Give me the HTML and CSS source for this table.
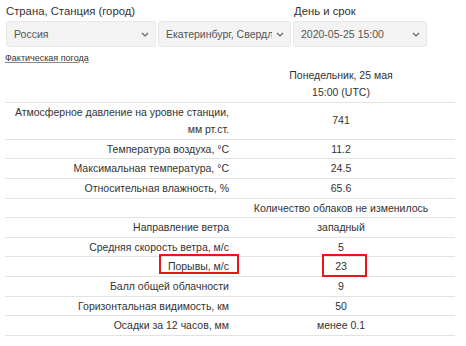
FILE: index.html
```html
<!DOCTYPE html>
<html lang="ru">
<head>
<meta charset="utf-8">
<title>Фактическая погода</title>
<link rel="stylesheet" href="styles.css">
</head>
<body>
<div class="filters">
  <div class="group group-station">
    <div class="label">Страна, Станция (город)</div>
    <div class="selects">
      <div class="select sel-country"><span class="sel-text">Россия</span><svg class="chev" viewBox="0 0 8 5" width="8" height="5"><path d="M1 1l3 3 3-3" fill="none" stroke="#666" stroke-width="1.2"/></svg></div>
      <div class="select sel-city"><span class="sel-text">Екатеринбург, Свердловская область</span><svg class="chev" viewBox="0 0 8 5" width="8" height="5"><path d="M1 1l3 3 3-3" fill="none" stroke="#666" stroke-width="1.2"/></svg></div>
    </div>
  </div>
  <div class="group group-date">
    <div class="label">День и срок</div>
    <div class="select sel-date"><span class="sel-text">2020-05-25 15:00</span><svg class="chev" viewBox="0 0 8 5" width="8" height="5"><path d="M1 1l3 3 3-3" fill="none" stroke="#666" stroke-width="1.2"/></svg></div>
  </div>
</div>
<a class="fact-link" href="#">Фактическая погода</a>
<table class="wx">
  <thead>
    <tr><th class="lbl"></th><th class="val">Понедельник, 25 мая<br>15:00 (UTC)</th></tr>
  </thead>
  <tbody>
    <tr class="tall"><td class="lbl">Атмосферное давление на уровне станции,<br>мм рт.ст.</td><td class="val">741</td></tr>
    <tr><td class="lbl">Температура воздуха, °C</td><td class="val">11.2</td></tr>
    <tr><td class="lbl">Максимальная температура, °C</td><td class="val">24.5</td></tr>
    <tr><td class="lbl">Относительная влажность, %</td><td class="val">65.6</td></tr>
    <tr><td class="lbl"></td><td class="val">Количество облаков не изменилось</td></tr>
    <tr><td class="lbl">Направление ветра</td><td class="val">западный</td></tr>
    <tr><td class="lbl">Средняя скорость ветра, м/с</td><td class="val">5</td></tr>
    <tr><td class="lbl"><span class="mark mark-lbl">Порывы, м/с</span></td><td class="val"><span class="mark mark-val">23</span></td></tr>
    <tr><td class="lbl">Балл общей облачности</td><td class="val">9</td></tr>
    <tr><td class="lbl">Горизонтальная видимость, км</td><td class="val">50</td></tr>
    <tr><td class="lbl">Осадки за 12 часов, мм</td><td class="val">менее 0.1</td></tr>
  </tbody>
</table>
</body>
</html>
```

FILE: styles.css
```css
html, body {
  margin: 0;
  padding: 0;
  background: #fff;
}
body {
  font-family: "Liberation Sans", Arial, sans-serif;
  font-size: 10.5px;
  color: #333;
  padding: 4px 5px 0 5px;
}
.filters {
  display: flex;
  gap: 2px;
}
.group {
  display: flex;
  flex-direction: column;
}
.label {
  line-height: 15px;
  margin-left: 1px;
  margin-bottom: 2px;
  font-size: 11.3px;
}
.selects {
  display: flex;
  gap: 2px;
}
.select {
  box-sizing: border-box;
  height: 26px;
  background: #f3f3f3;
  border: 1px solid #e8e8e8;
  border-radius: 3px;
  display: flex;
  align-items: center;
  padding: 0 6px 0 7px;
  color: #555;
  font-size: 10.5px;
  overflow: hidden;
}
.sel-text {
  flex: 1;
  white-space: nowrap;
  overflow: hidden;
  min-width: 0;
}
.chev {
  flex: none;
  margin-left: 4px;
}
.sel-country { width: 150px; margin-left: 1px; }
.sel-city { width: 133px; }
.sel-date { width: 134px; }

.fact-link {
  display: block;
  margin-top: 4px;
  font-size: 9px;
  line-height: 14px;
  color: #333;
  text-decoration: underline;
  text-decoration-color: #888;
}

.wx {
  border-collapse: collapse;
  width: 450px;
  table-layout: fixed;
  margin-top: 0;
}
.wx th, .wx td {
  font-weight: normal;
  padding: 1px 0;
  line-height: 16.6px;
  white-space: nowrap;
}
.wx th {
  padding: 2px 0 0;
  line-height: 17.4px;
}
.wx .tall td {
  line-height: 17px;
}
.wx td {
  border-top: 1px solid #e2e2e2;
}
.wx tbody tr:last-child td {
  border-bottom: 1px solid #e2e2e2;
}
.wx .lbl {
  width: 224px;
  text-align: right;
  padding-right: 2px;
}
.wx .val {
  text-align: center;
  padding-right: 4px;
}
.mark {
  position: relative;
}
.mark::after {
  content: "";
  position: absolute;
  border: 2px solid #e8151b;
}
.mark-lbl::after {
  left: -9px;
  right: -10px;
  top: -6px;
  bottom: -1.5px;
}
.mark-val::after {
  left: -13px;
  right: -20px;
  top: -6px;
  bottom: -4.5px;
}
```
